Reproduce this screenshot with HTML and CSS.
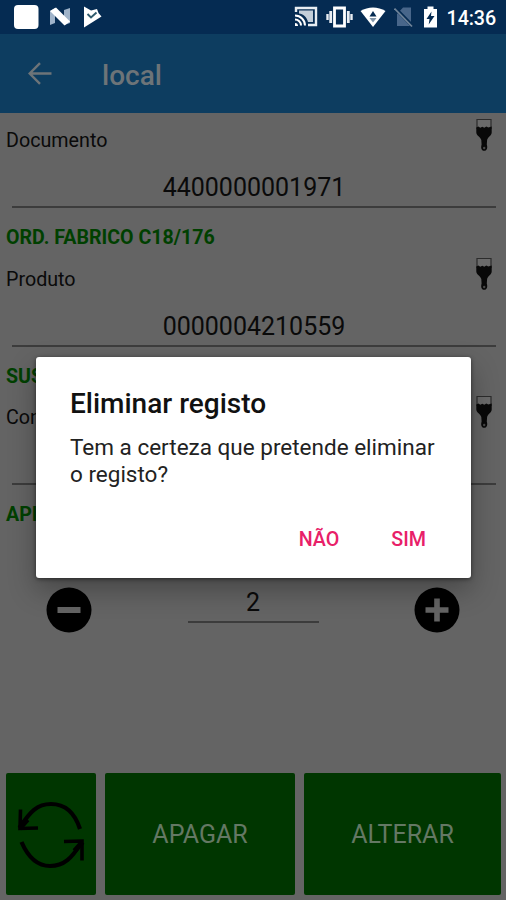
FILE: index.html
```html
<!DOCTYPE html>
<html lang="pt">
<head>
    <meta charset="UTF-8">
    <meta name="viewport" content="width=device-width, initial-scale=1.0">
    <title>local</title>
    <link rel="stylesheet" href="styles.css">
</head>
<body>
    <svg class="symbols" width="0" height="0">
        <symbol id="brush" viewBox="0 0 18 34">
            <path d="M2 1.500h14v9H2z" fill="#6a6a6a" stroke="#2c2c2c" stroke-width="1.200"/>
            <path d="M1.300 9.500l2-1 2 1.200 2-1 2 1 2-1.200 2 1 3.400-1v6c0 3-3.900 4.500-4.600 7.500l-.3 4.500c1.200 4-.3 6.300-2.600 6.300s-3.800-2.300-2.600-6.300l-.3-4.500c-.7-3-5-4.500-5-7.500z" fill="#080808"/>
            <circle cx="9.200" cy="30" r="1.200" fill="#484848"/>
        </symbol>
    </svg>

    <div class="status">
        <div class="status-left">
            <svg width="27" height="27" viewBox="0 0 27 27"><rect x="1" y="1" width="24.500" height="24" rx="4" fill="#fff"/></svg>
            <svg width="22" height="20" viewBox="0 0 22 20">
                <path d="M1 4l5-3v15l-5 2z" fill="#9fb3c9"/>
                <path d="M15 3l6-2v15l-6 2z" fill="#9fb3c9"/>
                <path d="M1 4l6-3.500 14 14-5.500 4z" fill="#fff"/>
            </svg>
            <svg width="20" height="22" viewBox="0 0 20 22">
                <path d="M2 .5l7 4 6-1.500 1.500 4 3 3.500L2 21.500z" fill="#fff"/>
                <path d="M5.500 8l3.500 3.500 5.500-5" fill="none" stroke="#2f5a6c" stroke-width="1.900"/>
            </svg>
        </div>
        <div class="status-right">
            <svg width="24" height="22" viewBox="0 0 24 22">
                <path d="M2 6V2h20v17h-8" fill="none" stroke="#e8edf2" stroke-width="2.400"/>
                <path d="M5 4.500h14v11.500h-5C13 11 9 8 5 7.500z" fill="#c3ced9"/>
                <path d="M1 9.500a10 10 0 0 1 10 10M1 13.500a6 6 0 0 1 6 6" fill="none" stroke="#fff" stroke-width="2"/>
                <path d="M1 17a3 3 0 0 1 3 3H1z" fill="#fff"/>
            </svg>
            <svg width="27" height="22" viewBox="0 0 27 22">
                <path d="M8.500 2h10v18h-10z" fill="none" stroke="#fff" stroke-width="2.800"/>
                <path d="M4.700 5v12M22.300 5v12" stroke="#e8edf2" stroke-width="2.800"/>
                <path d="M1.500 8v6M25.500 8v6" stroke="#e8edf2" stroke-width="2.400"/>
            </svg>
            <svg width="26" height="22" viewBox="0 0 26 22">
                <path d="M.5 5C8 .200 18 .200 25.500 5L13 21z" fill="#fff"/>
                <path d="M9.500 10.500L13 5l3.500 5.500z" fill="#052b52"/>
                <path d="M9.500 12h7L13 16.500z" fill="#8195a9"/>
            </svg>
            <svg width="20" height="22" viewBox="0 0 20 22">
                <path d="M3 8l6-6.500h8V20H3z" fill="#48668a"/>
                <path d="M1.500 2.500l17 17.500" stroke="#052b52" stroke-width="3.500"/>
                <path d="M.5 2.500l17.500 18" stroke="#708499" stroke-width="1.700"/>
            </svg>
            <svg class="battery" width="15" height="22" viewBox="0 0 15 22">
                <path d="M1 3h3.500V.5h6V3H14v18.500H1z" fill="#fff"/>
                <path d="M8.500 5.500L3.500 13h3l-.8 5.500L11.500 10H8z" fill="#052b52"/>
            </svg>
            <span class="clock">14:36</span>
        </div>
    </div>

    <div class="appbar">
        <svg width="24" height="24" viewBox="0 0 24 24"><path d="M23.500 11.500H2M12 1.200L1.700 11.500 12 21.800" fill="none" stroke="#6d7478" stroke-width="2.400"/></svg>
        <h1>local</h1>
    </div>

    <div class="content">
        <div class="field">
            <div class="label">Documento <svg class="brush"><use href="#brush"/></svg></div>
            <div class="value">4400000001971</div>
            <div class="info">ORD. FABRICO C18/176</div>
        </div>
        <div class="field">
            <div class="label">Produto <svg class="brush"><use href="#brush"/></svg></div>
            <div class="value">0000004210559</div>
            <div class="info">SUS</div>
        </div>
        <div class="field">
            <div class="label">Con <svg class="brush"><use href="#brush"/></svg></div>
            <div class="value"></div>
            <div class="info">API</div>
        </div>

        <div class="quantity">
            <svg width="46" height="46" viewBox="0 0 46 46"><circle cx="23" cy="23" r="22.500" fill="#000"/><path d="M11.500 23h23" stroke="#646464" stroke-width="6"/></svg>
            <div class="amount">2</div>
            <svg width="46" height="46" viewBox="0 0 46 46"><circle cx="23" cy="23" r="22.500" fill="#000"/><path d="M11.500 23h23M23 11.500v23" stroke="#646464" stroke-width="5.600"/></svg>
        </div>

        <div class="buttons">
            <button class="button">
                <svg width="70" height="68" viewBox="0 0 70 68" fill="none" stroke="#000">
                    <path d="M64 28C58.500 11 48 3 35 3 21 3 14 11 4 26M5.500 41C12 56 21 65 34 65c14 0 22-8 31-23" stroke-width="4.200"/>
                    <path d="M4.500 8.500L4 27.500l18-.5M48 40.500l18-.500v19.500" stroke-width="3.600"/>
                    <path d="M3.500 27.500l8-9M66.500 41l-8 9" stroke-width="5"/>
                </svg>
            </button>
            <button class="button">APAGAR</button>
            <button class="button">ALTERAR</button>
        </div>
    </div>

    <div class="dialog">
        <h2>Eliminar registo</h2>
        <p>Tem a certeza que pretende eliminar o registo?</p>
        <div class="actions">
            <button class="action">NÃO</button>
            <button class="action">SIM</button>
        </div>
    </div>
</body>
</html>
```
FILE: styles.css
```css
* {
    box-sizing: border-box;
}
body {
    margin: 0;
    height: 900px;
    overflow: hidden;
    display: flex;
    flex-direction: column;
    background-color: #646464;
    color: #0a0a0a;
    font-family: Roboto, sans-serif;
    font-size: 19.7px;
}
svg {
    display: block;
    flex: none;
}
.symbols {
    position: absolute;
}
h1, h2, p {
    margin: 0;
    font-weight: 500;
}
button {
    border: none;
    padding: 0;
    font-family: inherit;
}

/* status bar */
.status {
    height: 34px;
    flex: none;
    display: flex;
    justify-content: space-between;
    padding: 0 10px 0 13px;
    background-color: #052b52;
    color: #fff;
}
.status-left, .status-right {
    display: flex;
    align-items: center;
}
.status-left {
    gap: 11px;
}
.status-left svg:first-child {
    margin-right: -2px;
}
.status-right {
    gap: 8px;
}
.status-right svg:nth-child(2) {
    margin-right: -1px;
}
.battery {
    margin-left: 1px;
}
.clock {
    font-weight: 500;
    line-height: 30px;
    padding-top: 4px;
    margin-left: 1px;
    letter-spacing: -0.1px;
}

/* title bar */
.appbar {
    height: 79px;
    flex: none;
    display: flex;
    align-items: center;
    gap: 50px;
    padding: 0 28px;
    background-color: #0d3d60;
}
.appbar h1 {
    font-size: 28px;
    color: #6d7478;
    line-height: 34px;
    margin-top: 4px;
}

/* form */
.content {
    flex: 1;
    display: flex;
    flex-direction: column;
    padding: 0 5px 5px 6px;
}
.field {
    height: 138.5px;
}
.label {
    height: 54px;
    display: flex;
    justify-content: space-between;
    line-height: 55px;
    padding-right: 8px;
}
.brush {
    width: 18px;
    height: 34px;
    margin-top: 5px;
}
.value {
    height: 41px;
    margin: 0 5px 0 6px;
    border-bottom: 2px solid #3c3c3c;
    font-size: 25px;
    line-height: 42.5px;
    text-align: center;
}
.info {
    line-height: 59px;
    font-size: 19.6px;
    font-weight: 700;
    color: #004000;
}
.quantity {
    display: flex;
    justify-content: space-between;
    padding: 58px 41px 0 40px;
}
.amount {
    width: 131px;
    height: 36px;
    border-bottom: 2px solid #3c3c3c;
    font-size: 25px;
    line-height: 31px;
    text-align: center;
}
.buttons {
    margin-top: auto;
    height: 122px;
    display: grid;
    grid-template-columns: 90px 190px 1fr;
    gap: 9px;
}
.button {
    display: flex;
    align-items: center;
    justify-content: center;
    padding-top: 1px;
    background-color: #003600;
    color: #647864;
    border-radius: 2px;
    font-size: 25px;
}

/* confirmation dialog */
.dialog {
    position: absolute;
    left: 36px;
    top: 357px;
    width: 435px;
    height: 221px;
    padding: 28px 34px 0;
    display: flex;
    flex-direction: column;
    background-color: #fff;
    border-radius: 3px;
    box-shadow: 0 12px 28px rgba(0, 0, 0, 0.3), 0 1px 4px rgba(0, 0, 0, 0.5);
}
.dialog h2 {
    font-size: 28px;
    line-height: 37px;
    color: #111;
}
.dialog p {
    margin-top: 12px;
    font-size: 22.5px;
    font-weight: 400;
    line-height: 27px;
    color: #222;
}
.actions {
    display: flex;
    justify-content: flex-end;
    gap: 52px;
    margin: 39px 11px 0 0;
}
.action {
    background: none;
    color: #e82068;
    font-size: 19.7px;
    font-weight: 500;
    line-height: 26px;
}
```
